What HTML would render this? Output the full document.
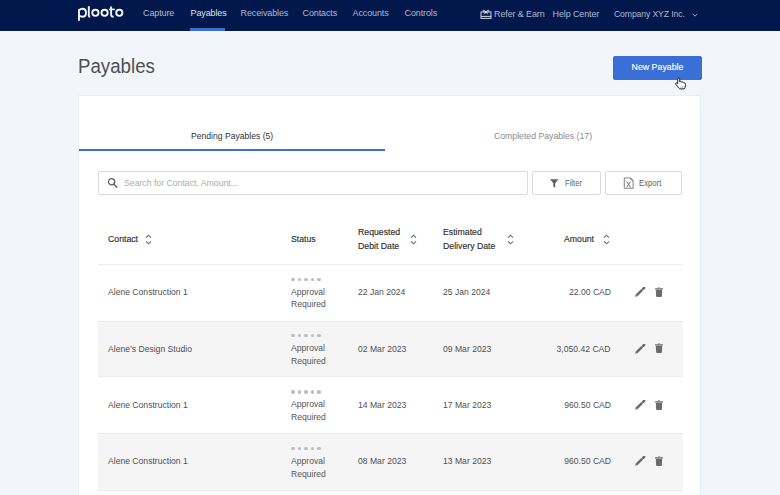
<!DOCTYPE html>
<html><head><meta charset="utf-8">
<style>
*{margin:0;padding:0;box-sizing:border-box}
html,body{width:780px;height:495px;overflow:hidden;background:#f2f5f9;font-family:"Liberation Sans",sans-serif;position:relative}
.a{position:absolute;white-space:nowrap}
#nav{position:absolute;left:0;top:0;width:780px;height:31px;background:#02184c}
.ni{position:absolute;top:8.45px;font-size:9px;color:#aeb8cc;line-height:11px;letter-spacing:-0.12px}
#card{position:absolute;left:78.3px;top:94.6px;width:622.7px;height:420px;background:#fff;border:1px solid #eaedf1}
.hd{font-size:9.4px;color:#2e2e2e;line-height:14.6px;-webkit-text-stroke:0.15px #2e2e2e;transform:scaleX(0.93);transform-origin:0 0}
.rw{position:absolute;left:97.5px;width:585px}
.tx{font-size:9px;color:#505050;line-height:11px;transform:scaleX(0.955);transform-origin:0 0}
.rt{transform-origin:100% 0}
.st{line-height:12.8px;color:#555}
.dots{position:absolute;display:flex;gap:3px}
.dots i{display:block;width:3.5px;height:3.5px;border-radius:50%;background:#bcbcbc}
</style></head><body>
<svg width="0" height="0" style="position:absolute">
<defs>
<g id="pen"><path d="M1.6 8.4L7.1 2.9" stroke="#6b6b6b" stroke-width="2.5"/><path d="M0.3 9.7L0.7 7.3L2.7 9.3Z" fill="#6b6b6b"/><path d="M8.1 1.9L9.2 0.8" stroke="#6b6b6b" stroke-width="2.5" stroke-linecap="round"/></g>
<g id="bin"><rect x="0" y="1.2" width="8" height="1.2" rx="0.3" fill="#6e6e6e"/><rect x="2.8" y="0.4" width="2.4" height="1" rx="0.3" fill="#777"/><path d="M0.8 2.8H7.2L6.9 9.2Q6.8 10 6 10H2Q1.2 10 1.1 9.2Z" fill="#6b6b6b"/></g>
</defs></svg>
<div id="nav">
  <svg class="a" style="left:0;top:0" width="130" height="31" viewBox="0 0 130 31"><g fill="none" stroke="#f4f6fa" stroke-width="1.9">
<path d="M79 9.2V20.8"/><path d="M79 10.2Q80.5 8.8 82.6 8.8Q86 8.8 86 12.8Q86 16.8 82.6 16.8Q80.5 16.8 79 15.4"/>
<path d="M88.8 6.2V15.2Q88.8 16.8 90.2 16.8"/>
<circle cx="95.4" cy="12.8" r="3.1"/><circle cx="104.6" cy="12.8" r="3.1"/>
<path d="M111.1 6.4V14.8Q111.1 16.8 113.6 16.8"/><path d="M109 9.4H114.8" stroke-width="1.6"/>
<circle cx="119.3" cy="12.8" r="3.1"/></g></svg>
  <div class="ni" style="left:143px">Capture</div>
  <div class="ni" style="left:190.5px;color:#dde2ec">Payables</div>
  <div class="a" style="left:190px;top:28px;width:35px;height:3px;background:#3b6fd8"></div>
  <div class="ni" style="left:240.5px">Receivables</div>
  <div class="ni" style="left:302.5px">Contacts</div>
  <div class="ni" style="left:352.5px">Accounts</div>
  <div class="ni" style="left:404.5px">Controls</div>
  <svg class="a" style="left:479.5px;top:8.5px" width="12" height="11" viewBox="0 0 12 11">
    <rect x="1" y="3" width="10" height="6.4" fill="none" stroke="#c3cad8" stroke-width="1.1"/>
    <path d="M1 7.4H11" stroke="#c3cad8" stroke-width="1.1"/>
    <path d="M6 3.1C4.8 0.9 2.7 0.5 3.1 2.3C3.3 3 5 3.1 6 3.1C7 3.1 8.7 3 8.9 2.3C9.3 0.5 7.2 0.9 6 3.1Z" fill="none" stroke="#d8dce6" stroke-width="1"/>
    <path d="M4.2 5.3L6 3.2L7.8 5.3" fill="none" stroke="#d8dce6" stroke-width="0.9"/>
  </svg>
  <div class="ni" style="left:494px;top:8.5px">Refer &amp; Earn</div>
  <div class="ni" style="left:552.5px;top:8.5px">Help Center</div>
  <div class="ni" style="left:614px;top:8.6px;transform:scaleX(0.96);transform-origin:0 0">Company XYZ Inc.</div>
  <svg class="a" style="left:691.5px;top:12.5px" width="6" height="4" viewBox="0 0 6 4"><path d="M0.6 0.9L3 3.1L5.4 0.9" fill="none" stroke="#9aa5bd" stroke-width="1"/></svg>
</div>
<div class="a" style="left:77.8px;top:55.4px;font-size:20px;color:#4c5058;transform:scaleX(0.935);transform-origin:0 0">Payables</div>
<div class="a" style="left:613px;top:55.5px;width:89px;height:24px;background:#3a6fd8;border-radius:2px;color:#fff;font-size:8.8px;text-align:center;line-height:23px;-webkit-text-stroke:0.12px #fff">New Payable</div>
<div id="card"></div>
<div class="a" style="left:191px;top:131px;font-size:8.6px;color:#333">Pending Payables (5)</div>
<div class="a" style="left:494px;top:131px;font-size:8.7px;color:#8a8a8a">Completed Payables (17)</div>
<div class="a" style="left:78.5px;top:148.5px;width:306.5px;height:2.5px;background:#3b6fd8"></div>
<div class="a" style="left:97.5px;top:171px;width:430px;height:24px;border:1px solid #d9d9d9;border-radius:2px"></div>
<svg class="a" style="left:107px;top:177px" width="12" height="12" viewBox="0 0 12 12"><circle cx="4.6" cy="4.8" r="3.1" fill="none" stroke="#606060" stroke-width="1.3"/><path d="M6.9 7.2L9.9 10.3" stroke="#606060" stroke-width="1.4" stroke-linecap="round"/></svg>
<div class="a" style="left:124px;top:178px;font-size:8.7px;color:#ababab">Search for Contact, Amount...</div>
<div class="a" style="left:532px;top:170.5px;width:68.5px;height:24.5px;border:1px solid #d9d9d9;border-radius:2px"></div>
<svg class="a" style="left:550px;top:178.5px" width="9" height="9" viewBox="0 0 9 9"><path d="M0 0.3H8.4L5.2 4.2V8.7L3.3 7.6V4.2Z" fill="#626262"/></svg>
<div class="a" style="left:564.5px;top:178px;font-size:8.7px;color:#5f5f5f;transform:scaleX(0.88);transform-origin:0 0">Filter</div>
<div class="a" style="left:605px;top:170.5px;width:77px;height:24.5px;border:1px solid #d9d9d9;border-radius:2px"></div>
<svg class="a" style="left:623px;top:176.5px" width="11" height="12" viewBox="0 0 11 12"><path d="M1.3 1H7.2L10.1 4V11.3H1.3Z" fill="none" stroke="#8a8a8a" stroke-width="1.1" stroke-linejoin="round"/><path d="M7 1.2Q9.4 1.6 9.9 4" fill="none" stroke="#8a8a8a" stroke-width="0.8"/><path d="M3.6 4.6L7.6 10.4M7.4 4.6L3.7 10.4" stroke="#6e6e6e" stroke-width="1"/></svg>
<div class="a" style="left:639px;top:178px;font-size:8.7px;color:#5f5f5f;transform:scaleX(0.89);transform-origin:0 0">Export</div>

<div class="a hd" style="left:108px;top:231.6px">Contact</div>
<svg class="a" style="left:145px;top:233.5px" width="7" height="11" viewBox="0 0 7 11"><path d="M1 3.6L3.5 1.2L6 3.6M1 7.4L3.5 9.8L6 7.4" fill="none" stroke="#6a6a6a" stroke-width="1.1"/></svg>
<div class="a hd" style="left:291px;top:231.6px">Status</div>
<div class="a hd" style="left:358px;top:224.8px">Requested<br>Debit Date</div>
<svg class="a" style="left:409.5px;top:233.5px" width="7" height="11" viewBox="0 0 7 11"><path d="M1 3.6L3.5 1.2L6 3.6M1 7.4L3.5 9.8L6 7.4" fill="none" stroke="#6a6a6a" stroke-width="1.1"/></svg>
<div class="a hd" style="left:443px;top:224.8px">Estimated<br>Delivery Date</div>
<svg class="a" style="left:506.5px;top:233.5px" width="7" height="11" viewBox="0 0 7 11"><path d="M1 3.6L3.5 1.2L6 3.6M1 7.4L3.5 9.8L6 7.4" fill="none" stroke="#6a6a6a" stroke-width="1.1"/></svg>
<div class="a hd" style="left:564px;top:231.6px">Amount</div>
<svg class="a" style="left:603px;top:233.5px" width="7" height="11" viewBox="0 0 7 11"><path d="M1 3.6L3.5 1.2L6 3.6M1 7.4L3.5 9.8L6 7.4" fill="none" stroke="#6a6a6a" stroke-width="1.1"/></svg>
<div class="a" style="left:97.5px;top:263.5px;width:585px;height:1px;background:#ececec"></div>
<div class="a tx" style="left:107.5px;top:287.18px">Alene Construction 1</div><div class="dots" style="left:291.3px;top:277.50px"><i></i><i></i><i></i><i></i><i></i></div><div class="a tx st" style="left:291px;top:285.60px">Approval<br>Required</div><div class="a tx" style="left:357.5px;top:287.18px">22 Jan 2024</div><div class="a tx" style="left:442.5px;top:287.18px">25 Jan 2024</div><div class="a tx rt" style="right:169px;top:287.18px">22.00 CAD</div><svg class="a" style="left:634.5px;top:287.20px" width="11" height="10" viewBox="0 0 11 10"><use href="#pen"/></svg><svg class="a" style="left:655px;top:286.90px" width="8" height="10" viewBox="0 0 8 10"><use href="#bin"/></svg>
<div class="rw" style="top:320.60px;height:56.60px;background:#f5f5f5;border-top:1px solid #ebebeb;border-bottom:1px solid #ebebeb"></div>
<div class="a tx" style="left:107.5px;top:343.58px">Alene&#8217;s Design Studio</div><div class="dots" style="left:291.3px;top:333.90px"><i></i><i></i><i></i><i></i><i></i></div><div class="a tx st" style="left:291px;top:342.00px">Approval<br>Required</div><div class="a tx" style="left:357.5px;top:343.58px">02 Mar 2023</div><div class="a tx" style="left:442.5px;top:343.58px">09 Mar 2023</div><div class="a tx rt" style="right:169px;top:343.58px">3,050.42 CAD</div><svg class="a" style="left:634.5px;top:343.60px" width="11" height="10" viewBox="0 0 11 10"><use href="#pen"/></svg><svg class="a" style="left:655px;top:343.30px" width="8" height="10" viewBox="0 0 8 10"><use href="#bin"/></svg>
<div class="a tx" style="left:107.5px;top:399.98px">Alene Construction 1</div><div class="dots" style="left:291.3px;top:390.30px"><i></i><i></i><i></i><i></i><i></i></div><div class="a tx st" style="left:291px;top:398.40px">Approval<br>Required</div><div class="a tx" style="left:357.5px;top:399.98px">14 Mar 2023</div><div class="a tx" style="left:442.5px;top:399.98px">17 Mar 2023</div><div class="a tx rt" style="right:169px;top:399.98px">960.50 CAD</div><svg class="a" style="left:634.5px;top:400.00px" width="11" height="10" viewBox="0 0 11 10"><use href="#pen"/></svg><svg class="a" style="left:655px;top:399.70px" width="8" height="10" viewBox="0 0 8 10"><use href="#bin"/></svg>
<div class="rw" style="top:433.10px;height:57.70px;background:#f5f5f5;border-top:1px solid #ebebeb;border-bottom:1px solid #ebebeb"></div>
<div class="a tx" style="left:107.5px;top:456.38px">Alene Construction 1</div><div class="dots" style="left:291.3px;top:446.70px"><i></i><i></i><i></i><i></i><i></i></div><div class="a tx st" style="left:291px;top:454.80px">Approval<br>Required</div><div class="a tx" style="left:357.5px;top:456.38px">08 Mar 2023</div><div class="a tx" style="left:442.5px;top:456.38px">13 Mar 2023</div><div class="a tx rt" style="right:169px;top:456.38px">960.50 CAD</div><svg class="a" style="left:634.5px;top:456.40px" width="11" height="10" viewBox="0 0 11 10"><use href="#pen"/></svg><svg class="a" style="left:655px;top:456.10px" width="8" height="10" viewBox="0 0 8 10"><use href="#bin"/></svg>
<div class="a tx" style="left:107.5px;top:512.68px">Alene Construction 1</div><div class="dots" style="left:291.3px;top:503.00px"><i></i><i></i><i></i><i></i><i></i></div><div class="a tx st" style="left:291px;top:511.10px">Approval<br>Required</div><div class="a tx" style="left:357.5px;top:512.68px">01 Apr 2023</div><div class="a tx" style="left:442.5px;top:512.68px">05 Apr 2023</div><div class="a tx rt" style="right:169px;top:512.68px">120.00 CAD</div><svg class="a" style="left:634.5px;top:512.70px" width="11" height="10" viewBox="0 0 11 10"><use href="#pen"/></svg><svg class="a" style="left:655px;top:512.40px" width="8" height="10" viewBox="0 0 8 10"><use href="#bin"/></svg>
<svg class="a" style="left:674px;top:76.5px" width="14" height="14" viewBox="0 0 14 14">
<path d="M3.7 2.3Q3.7 1.1 4.7 1.1Q5.7 1.1 5.7 2.3V4.7Q6.1 4.2 6.9 4.4Q7.5 4.6 7.6 5.1Q8.2 4.7 8.9 5Q9.4 5.3 9.5 5.8Q10.2 5.5 10.8 5.9Q11.4 6.3 11.4 7.1V8.7Q11.4 10.5 10.1 11.9H5.7Q4.7 11.3 3.7 9.7L1.7 7.1Q1.3 6.3 1.9 5.9Q2.6 5.5 3.7 6.7Z" fill="#fff" stroke="#1e1e1e" stroke-width="1"/>
<path d="M6.8 9.2V11M8.3 9.2V11M9.8 9.2V11" stroke="#aaa" stroke-width="0.6"/>
</svg>
</body></html>
